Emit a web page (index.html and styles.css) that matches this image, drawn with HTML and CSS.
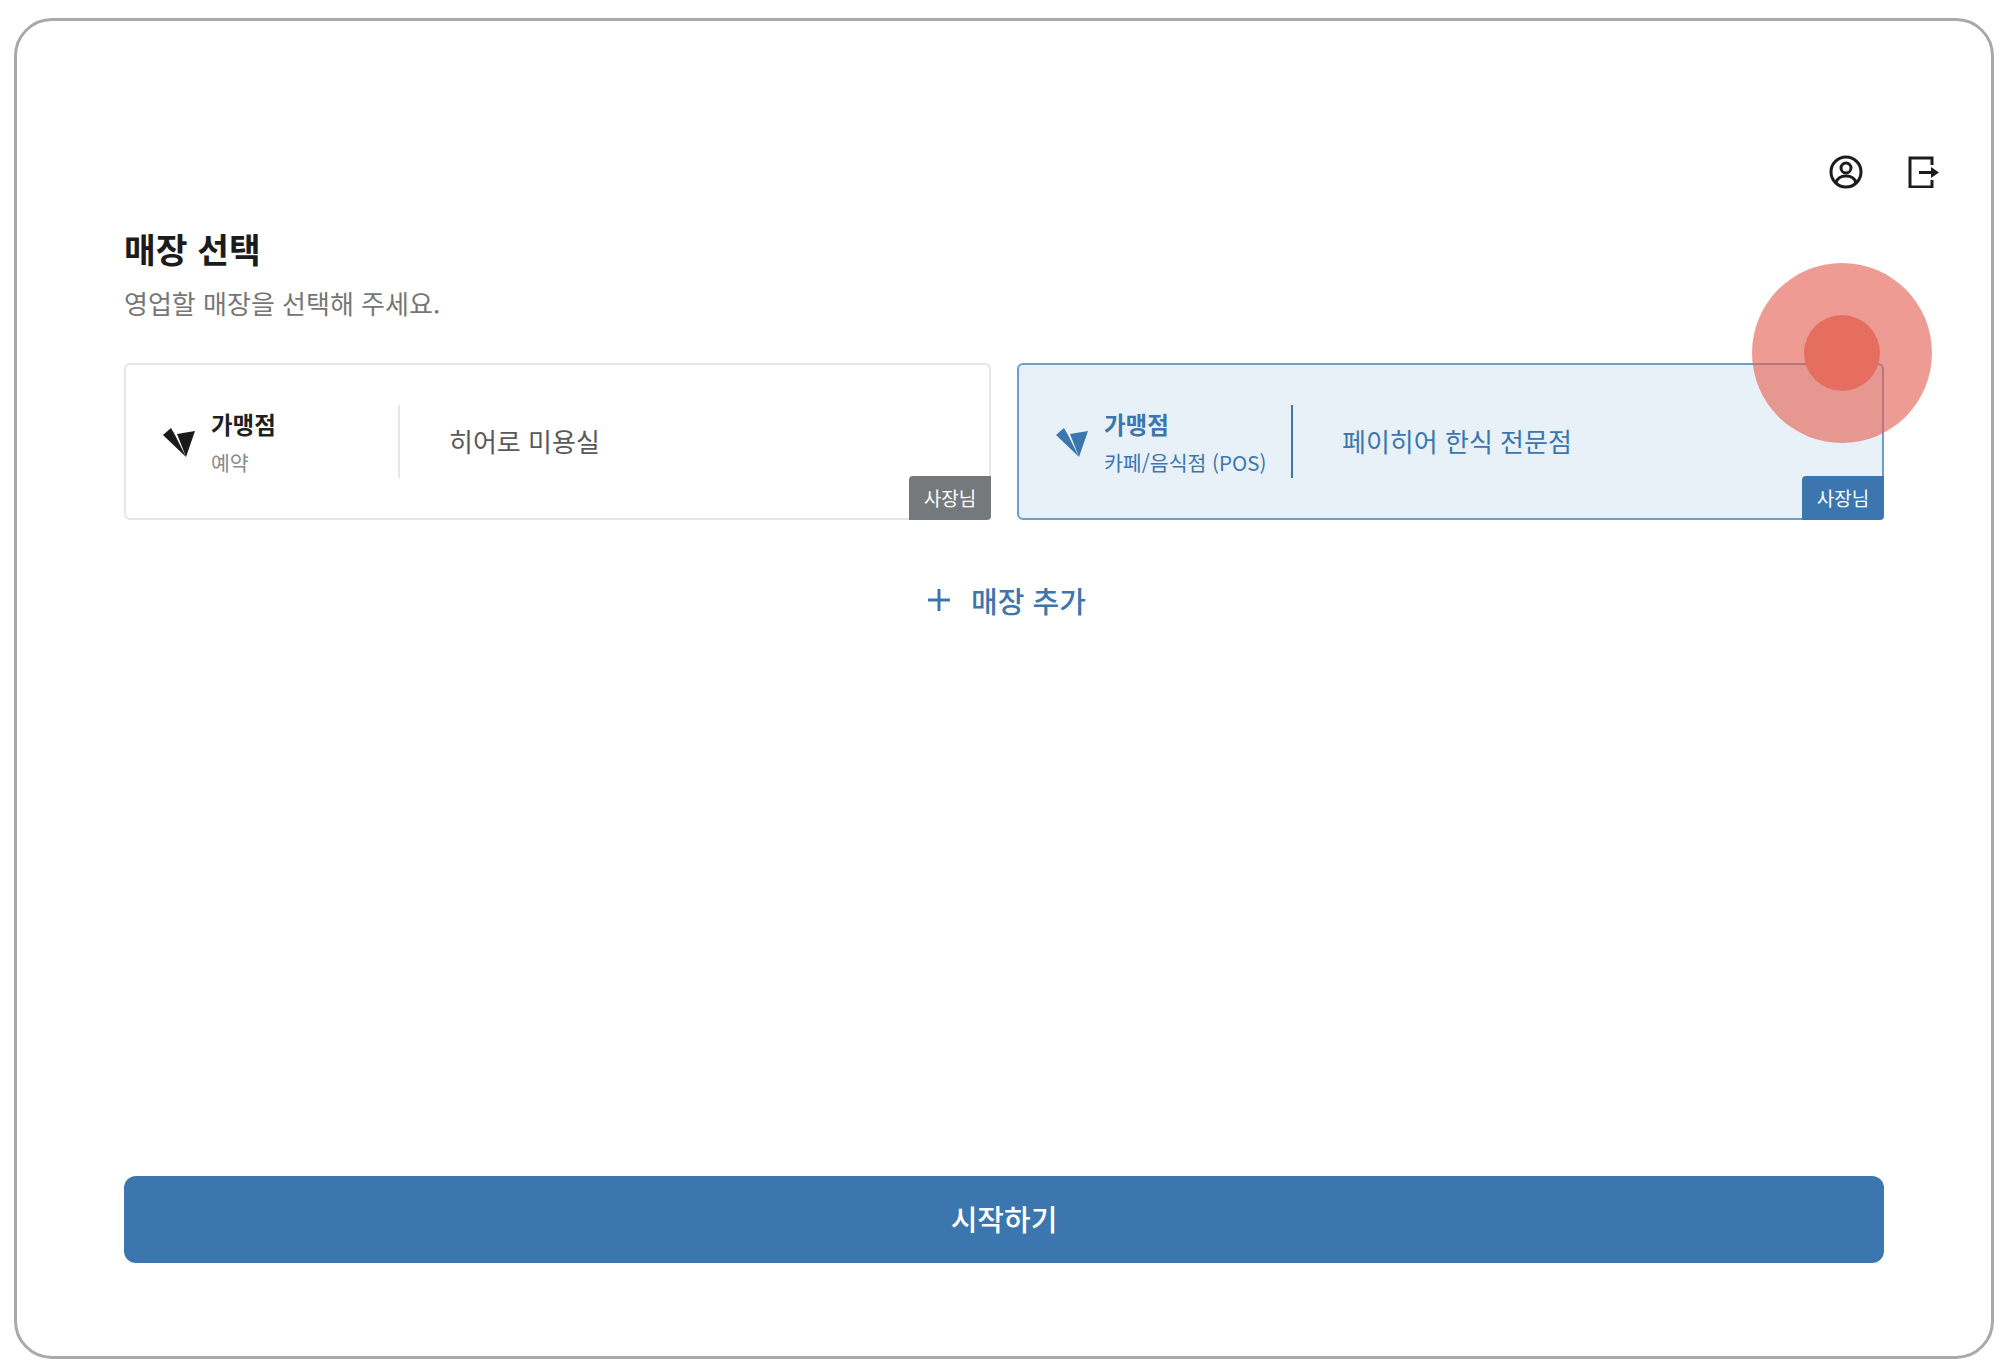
FILE: index.html
```html
<!DOCTYPE html>
<html lang="ko">
<head>
    <title>매장 선택</title>
    <link rel="stylesheet" href="styles.css">
</head>
<body>
    <div class="frame">
        <div class="topbar">
            <svg class="icon-user" width="34" height="34" viewBox="0 0 34 34" fill="none" stroke="#1c1c1c" stroke-width="3">
                <circle cx="17" cy="17" r="15"/>
                <circle cx="17" cy="13" r="5"/>
                <path d="M7 27.500c1.500-4.500 5.500-6.500 10-6.500s8.500 2 10 6.500"/>
            </svg>
            <svg class="icon-logout" width="32" height="32" viewBox="0 0 32 32" fill="none" stroke="#1c1c1c" stroke-width="3">
                <path d="M25 9V2H3v29h22v-7"/>
                <path d="M12 16.500h14"/>
                <path d="M24 11l8 5.500-8 5.500z" fill="#1c1c1c" stroke="none"/>
            </svg>
        </div>

        <div class="content">
            <h1>매장 선택</h1>
            <p class="subtitle">영업할 매장을 선택해 주세요.</p>

            <div class="store-list">
                <div class="store-card">
                    <svg class="logo" width="32" height="32" viewBox="0 0 32 32">
                        <path d="M0 9L8 2l4 7 11 22z" fill="#1a1a1a"/>
                        <path d="M14 8l18-3-9 26z" fill="#1a1a1a"/>
                    </svg>
                    <div class="store-info">
                        <div class="store-type">가맹점</div>
                        <div class="store-sector">예약</div>
                    </div>
                    <div class="store-name">히어로 미용실</div>
                    <span class="role-badge">사장님</span>
                </div>
                <div class="store-card selected">
                    <svg class="logo" width="32" height="32" viewBox="0 0 32 32">
                        <path d="M0 9L8 2l4 7 11 22z" fill="#3b76ae"/>
                        <path d="M14 8l18-3-9 26z" fill="#3b76ae"/>
                    </svg>
                    <div class="store-info">
                        <div class="store-type">가맹점</div>
                        <div class="store-sector">카페/음식점 (POS)</div>
                    </div>
                    <div class="store-name">페이히어 한식 전문점</div>
                    <span class="role-badge">사장님</span>
                </div>
            </div>

            <div class="add-store">
                <svg width="24" height="24" viewBox="0 0 24 24" stroke="#3b76ae" stroke-width="3">
                    <path d="M1 12h22M12 1v22"/>
                </svg>
                <span>매장 추가</span>
            </div>

            <button class="start-btn">시작하기</button>
        </div>

        <!-- tap marker -->
        <div class="touch-outer"></div>
        <div class="touch-inner"></div>
    </div>
</body>
</html>
```

FILE: styles.css
```css
body {
    margin: 0;
    background-color: white;
    font-family: "Noto Sans CJK KR", "Noto Sans", sans-serif;
}

.frame {
    position: relative;
    display: flex;
    flex-direction: column;
    box-sizing: border-box;
    height: 1341px;
    margin: 18px 6px 8px 14px;
    border: 3px solid #a9a9a9;
    border-radius: 38px;
    background: white;
}

.topbar {
    display: flex;
    justify-content: flex-end;
    align-items: center;
    gap: 44px;
    padding: 134px 52px 0 0;
}

.content {
    flex: 1;
    display: flex;
    flex-direction: column;
    padding: 0 107px 93px 107px;
}

h1 {
    margin: 34px 0 0;
    font-size: 34.5px;
    line-height: 50px;
    font-weight: 700;
    color: #1c1c1c;
}

.subtitle {
    margin: 11px 0 0;
    font-size: 26px;
    line-height: 38px;
    color: #767676;
}

.store-list {
    display: grid;
    grid-template-columns: 1fr 1fr;
    gap: 26px;
    margin-top: 41px;
}

.store-card {
    position: relative;
    display: flex;
    align-items: center;
    box-sizing: border-box;
    height: 157px;
    padding-left: 37px;
    border: 2px solid #e6e6e6;
    border-radius: 6px;
    color: #5a5a5a;
}

.store-card .logo {
    flex-shrink: 0;
    margin: 0 16px 0 0;
}

.store-info {
    width: 187px;
    flex-shrink: 0;
}

.store-type {
    font-size: 23.5px;
    line-height: 36px;
    font-weight: 700;
    color: #1f1f1f;
}

.store-sector {
    margin-top: 5px;
    font-size: 20.5px;
    line-height: 30px;
    color: #8a8a8a;
}

.store-name {
    display: flex;
    align-items: center;
    box-sizing: border-box;
    height: 73px;
    padding: 0 0 2px 49px;
    border-left: 2px solid #e6e6e6;
    font-size: 26px;
}

.role-badge {
    position: absolute;
    right: -2px;
    bottom: -2px;
    width: 82px;
    height: 44px;
    line-height: 44px;
    text-align: center;
    font-size: 19px;
    color: white;
    background-color: #75797c;
    border-radius: 4px 0 4px 0;
}

.store-card.selected {
    background-color: #e8f1f8;
    border-color: #6a9fcb;
    color: #3b76ae;
}

.store-card.selected .store-type,
.store-card.selected .store-sector {
    color: #3b76ae;
}

.store-card.selected .store-name {
    border-left-color: #3b76ae;
}

.store-card.selected .role-badge {
    background-color: #3b76ae;
}

.add-store {
    display: flex;
    justify-content: center;
    align-items: center;
    gap: 20px;
    margin-top: 59px;
    padding-left: 5px;
    font-size: 29px;
    line-height: 42px;
    font-weight: 500;
    color: #3b76ae;
}

.start-btn {
    margin-top: auto;
    height: 87px;
    padding-bottom: 5px;
    border: none;
    border-radius: 12px;
    background-color: #3b76ae;
    color: white;
    font-family: inherit;
    font-size: 29px;
    font-weight: 500;
}

.touch-outer {
    position: absolute;
    left: 1735px;
    top: 242px;
    width: 180px;
    height: 180px;
    border-radius: 50%;
    background-color: rgba(228, 96, 80, 0.62);
}

.touch-inner {
    position: absolute;
    left: 1787px;
    top: 294px;
    width: 76px;
    height: 76px;
    border-radius: 50%;
    background-color: #e56e60;
}
```
